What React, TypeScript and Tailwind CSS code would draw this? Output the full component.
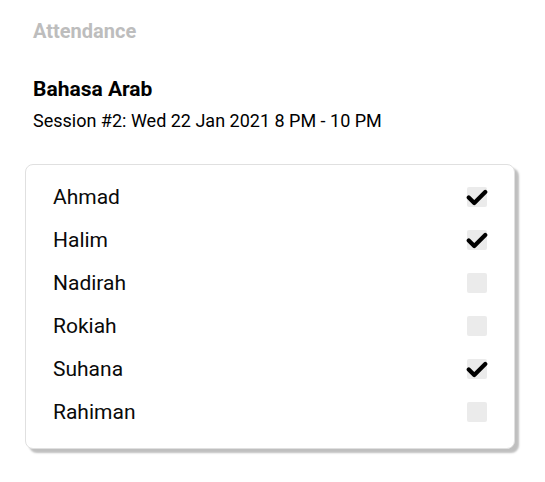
import React, { useState } from 'react';

const initial = [
  { name: 'Ahmad', present: true },
  { name: 'Halim', present: true },
  { name: 'Nadirah', present: false },
  { name: 'Rokiah', present: false },
  { name: 'Suhana', present: true },
  { name: 'Rahiman', present: false },
];

const App: React.FC = () => {
  const [students, setStudents] = useState(initial);

  const toggle = (i: number) =>
    setStudents(s => s.map((st, idx) => (idx === i ? { ...st, present: !st.present } : st)));

  return (
    <div className="min-h-screen bg-white font-['Roboto',sans-serif] text-black pl-[33px] pt-[19px]">
      <h1 className="text-[20px] font-bold leading-[24px] text-[#bdbdbd]">Attendance</h1>

      <h2 className="mt-[34px] text-[21px] font-bold leading-[24px]">Bahasa Arab</h2>
      <p className="mt-[9px] text-[18px] leading-[22px]">Session #2: Wed 22 Jan 2021 8 PM - 10 PM</p>

      {/* Student list */}
      <div className="mt-[32px] -ml-[8px] w-[490px] rounded-[8px] border border-[#e0e0e0] bg-white pt-[10px] pb-[15px] pl-[27px] pr-[27px] shadow-[4px_4px_2px_rgba(0,0,0,0.25)]">
        {students.map((st, i) => (
          <div key={st.name} className="flex h-[43px] items-center justify-between">
            <span className="text-[21px] leading-[24px] text-[#0a0a0a]">{st.name}</span>
            <button
              onClick={() => toggle(i)}
              className="relative flex h-[20px] w-[20px] items-center justify-center rounded-[2px] bg-[#ebebeb]"
            >
              {st.present && (
                <svg viewBox="0 0 20 20" className="absolute left-[-1px] top-[-1px] h-[22px] w-[22px]">
                  <path d="M2.5 10.5 L7.5 15.5 L17.5 5.5" fill="none" stroke="#000" strokeWidth="3.8" strokeLinecap="round" strokeLinejoin="round" />
                </svg>
              )}
            </button>
          </div>
        ))}
      </div>
    </div>
  );
};

export default App;
